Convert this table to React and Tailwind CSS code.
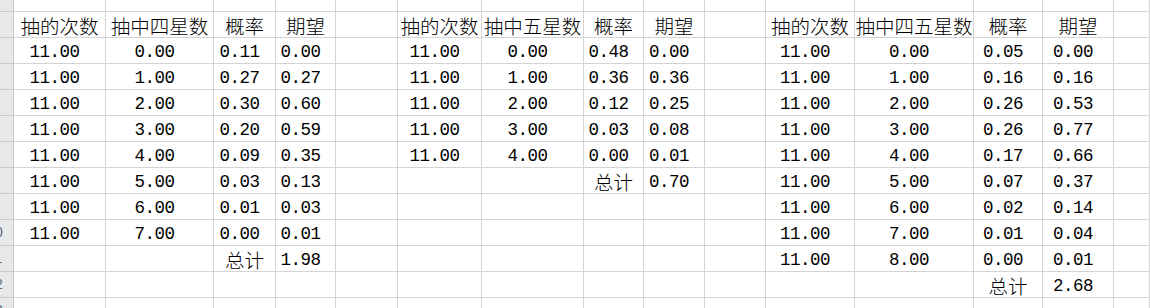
import React from "react";

const COLS =
  "grid-cols-[14px_92px_108px_62px_60px_62px_84px_102px_60px_61px_61px_89px_119px_69px_71px_36px]";

const TABLES = [
  {
    col: 0,
    headers: ["抽的次数", "抽中四星数", "概率", "期望"],
    rows: [
      ["0.00", "0.11", "0.00"],
      ["1.00", "0.27", "0.27"],
      ["2.00", "0.30", "0.60"],
      ["3.00", "0.20", "0.59"],
      ["4.00", "0.09", "0.35"],
      ["5.00", "0.03", "0.13"],
      ["6.00", "0.01", "0.03"],
      ["7.00", "0.00", "0.01"]
    ],
    total: "1.98"
  },
  {
    col: 5,
    headers: ["抽的次数", "抽中五星数", "概率", "期望"],
    rows: [
      ["0.00", "0.48", "0.00"],
      ["1.00", "0.36", "0.36"],
      ["2.00", "0.12", "0.25"],
      ["3.00", "0.03", "0.08"],
      ["4.00", "0.00", "0.01"]
    ],
    total: "0.70"
  },
  {
    col: 10,
    headers: ["抽的次数", "抽中四五星数", "概率", "期望"],
    rows: [
      ["0.00", "0.05", "0.00"],
      ["1.00", "0.16", "0.16"],
      ["2.00", "0.26", "0.53"],
      ["3.00", "0.26", "0.77"],
      ["4.00", "0.17", "0.66"],
      ["5.00", "0.07", "0.37"],
      ["6.00", "0.02", "0.14"],
      ["7.00", "0.01", "0.04"],
      ["8.00", "0.00", "0.01"]
    ],
    total: "2.68"
  }
];

// 13 sheet rows x 15 data columns (A..O)
const buildSheet = () => {
  const sheet = Array.from({ length: 13 }, () => Array(15).fill(""));
  TABLES.forEach(({ col, headers, rows, total }) => {
    headers.forEach((h, i) => {
      sheet[1][col + i] = h;
    });
    rows.forEach((r, i) => {
      sheet[2 + i][col] = "11.00";
      r.forEach((v, j) => {
        sheet[2 + i][col + 1 + j] = v;
      });
    });
    sheet[2 + rows.length][col + 2] = "总计";
    sheet[2 + rows.length][col + 3] = total;
  });
  return sheet;
};

const Cell = ({ value }) => {
  const isNumber = /^[0-9]/.test(value);
  if (!value) {
    return <div className="border-r border-b border-[#d4d4d4]" />;
  }
  return (
    <div
      className={`flex items-center justify-center whitespace-nowrap overflow-visible border-r border-b border-[#d4d4d4] text-black ${
        isNumber
          ? "pr-[10px] pt-[3px] text-[17.5px] tracking-[-0.5px] font-['Liberation_Mono',monospace]"
          : "pt-[2px] text-[19.5px] font-light font-['Noto_Sans_CJK_SC',sans-serif]"
      }`}
    >
      {value}
    </div>
  );
};

// only the right tip of the row numbers shows in the narrow header
const RowHeader = ({ n }) => (
  <div className="flex items-center overflow-hidden bg-[#e8e8e8] border-r border-b border-[#c8c8c8]">
    <div className="w-[30px] shrink-0 -ml-[20px] text-center text-[14px] text-[#5a6b80] font-['Liberation_Sans',sans-serif]">
      {n}
    </div>
  </div>
);

export default function App() {
  const sheet = buildSheet();

  return (
    <div className="w-[1150px] h-[308px] overflow-hidden bg-white">
      <div className={`grid ${COLS} grid-rows-[12px_repeat(12,26px)]`}>
        {sheet.map((row, r) => (
          <React.Fragment key={r}>
            <RowHeader n={r + 1} />
            {row.map((v, c) => (
              <Cell key={c} value={v} />
            ))}
          </React.Fragment>
        ))}
      </div>
    </div>
  );
}
